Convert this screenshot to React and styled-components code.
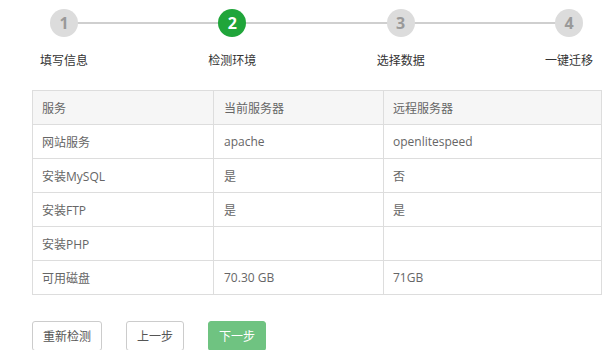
import React from "react";
import styled, { createGlobalStyle } from "styled-components";

const Global = createGlobalStyle`
  html, body { margin: 0; padding: 0; background: #fff; }
  body { font-family: "Open Sans", "Noto Sans CJK SC", sans-serif; font-size: 12px; color: #666; }
`;

const Page = styled.div`
  padding: 9px 10px 0 32px;
  width: 570px;
`;

const Steps = styled.div`
  position: relative;
  display: flex;
  justify-content: space-between;
  margin: 0 9px 0 8px;
`;

const Track = styled.div`
  position: absolute;
  left: 24px;
  right: 24px;
  top: 13px;
  height: 2px;
  background: #cfcfcf;
`;

const Step = styled.div`
  position: relative;
  display: flex;
  flex-direction: column;
  align-items: center;
  width: 48px;
`;

const Circle = styled.div`
  width: 28px;
  height: 28px;
  border-radius: 50%;
  background: ${(p) => (p.$active ? "#20a53a" : "#dcdcdc")};
  color: ${(p) => (p.$active ? "#fff" : "#999")};
  font-weight: 700;
  font-size: 16px;
  line-height: 28px;
  text-align: center;
`;

const StepLabel = styled.div`
  margin-top: 16px;
  font-size: 12px;
  line-height: 16px;
  color: #333;
  white-space: nowrap;
`;

const Table = styled.table`
  margin-top: 21px;
  width: 570px;
  border-collapse: collapse;
  table-layout: fixed;
`;

const Th = styled.th`
  height: 33px;
  padding: 0 0 0 ${(p) => p.$pad || 9}px;
  text-align: left;
  font-weight: 400;
  background: #f6f6f6;
  border: 1px solid #dddddd;
  color: #666;
  font-size: 12px;
`;

const Td = styled.td`
  height: 33px;
  padding: 0 0 0 ${(p) => p.$pad || 9}px;
  border: 1px solid #dddddd;
  color: #666;
  font-size: 12px;
`;

const Buttons = styled.div`
  display: flex;
  gap: 24px;
  margin-top: 26px;
`;

const Button = styled.button`
  font-family: "Open Sans", "Noto Sans CJK SC", sans-serif;
  font-size: 12px;
  height: 30px;
  padding: 0 10px;
  border-radius: 3px;
  border: 1px solid ${(p) => (p.$primary ? "#6fc381" : "#cccccc")};
  background: ${(p) => (p.$primary ? "#6fc381" : "#fff")};
  color: ${(p) => (p.$primary ? "#fff" : "#555")};
  cursor: pointer;
`;

const steps = ["填写信息", "检测环境", "选择数据", "一键迁移"];
const rows = [
  ["网站服务", "apache", "openlitespeed"],
  ["安装MySQL", "是", "否"],
  ["安装FTP", "是", "是"],
  ["安装PHP", "", ""],
  ["可用磁盘", "70.30 GB", "71GB"],
];

export default function App() {
  return (
    <>
      <Global />
      <Page>
        <Steps>
          <Track />
          {steps.map((s, i) => (
            <Step key={s}>
              <Circle $active={i === 1}>{i + 1}</Circle>
              <StepLabel>{s}</StepLabel>
            </Step>
          ))}
        </Steps>
        <Table>
          <colgroup>
            <col style={{ width: 181 }} />
            <col style={{ width: 170 }} />
            <col />
          </colgroup>
          <thead>
            <tr>
              <Th>服务</Th>
              <Th $pad={10}>当前服务器</Th>
              <Th>远程服务器</Th>
            </tr>
          </thead>
          <tbody>
            {rows.map((r) => (
              <tr key={r[0]}>
                <Td>{r[0]}</Td>
                <Td $pad={10}>{r[1]}</Td>
                <Td>{r[2]}</Td>
              </tr>
            ))}
          </tbody>
        </Table>
        <Buttons>
          <Button>重新检测</Button>
          <Button>上一步</Button>
          <Button $primary>下一步</Button>
        </Buttons>
      </Page>
    </>
  );
}
